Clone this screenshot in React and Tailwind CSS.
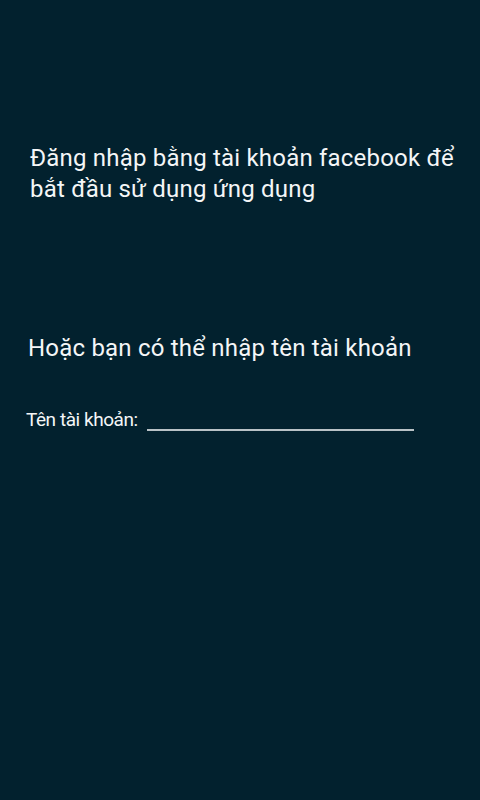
import React from 'react'

function App() {
  return (
    <div
      className="w-[480px] h-[800px] bg-[#02212e] text-white flex flex-col"
      style={{ fontFamily: 'Roboto, "Noto Sans", sans-serif' }}
    >
      <p className="mt-[143px] ml-[30px] w-[435px] text-[24px] leading-[31px] tracking-[0.2px] text-[#f4f6f7]">
        Đăng nhập bằng tài khoản facebook để bắt đầu sử dụng ứng dụng
      </p>
      <p className="mt-[128px] ml-[28px] text-[24px] leading-[31px] tracking-[0.2px] text-[#f4f6f7]">
        Hoặc bạn có thể nhập tên tài khoản
      </p>
      <div className="mt-[44px] ml-[26px] flex items-end">
        <span className="text-[19px] leading-[24px] tracking-[-0.45px] text-[#f4f6f7]">Tên tài khoản:</span>
        <input
          type="text"
          className="ml-[9px] w-[267px] h-[22px] bg-transparent border-b-2 border-[#b9c2c6] outline-none text-[19px] text-white mb-[1px]"
        />
      </div>
    </div>
  )
}

export default App
